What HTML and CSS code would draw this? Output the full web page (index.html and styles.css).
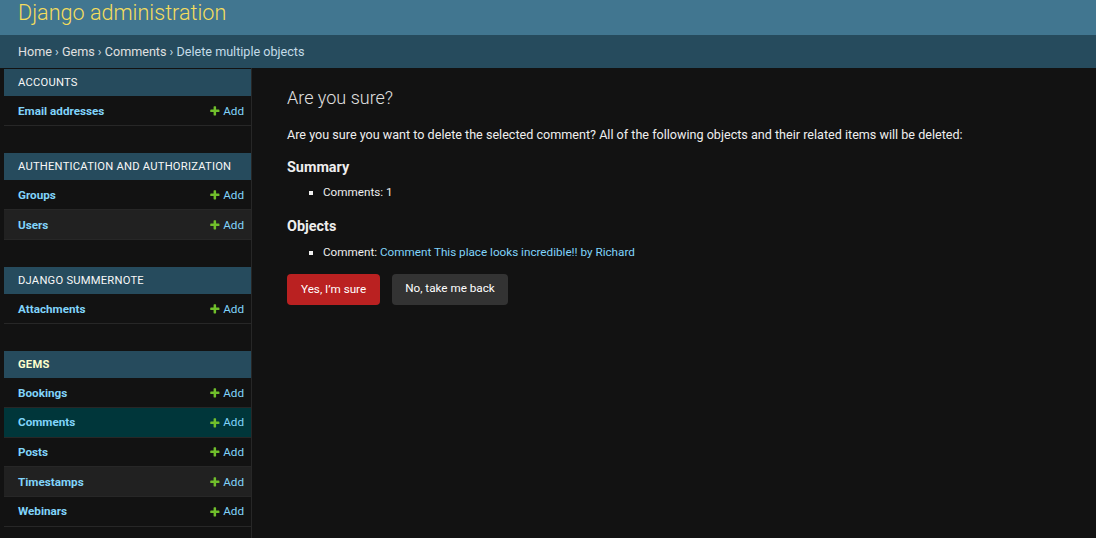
FILE: index.html
```html
<!DOCTYPE html>
<html lang="en">
<head>
<meta charset="utf-8">
<title>Delete multiple objects | Django site admin</title>
<link rel="stylesheet" href="styles.css">
</head>
<body>
<header class="header">
  <h1 class="branding">Django administration</h1>
</header>
<nav class="breadcrumbs">
  <a href="#">Home</a> › <a href="#">Gems</a> › <a href="#">Comments</a> › Delete multiple objects
</nav>
<div class="main">
  <aside class="sidebar">
    <div class="module">
      <div class="caption">Accounts</div>
      <div class="row"><a class="model" href="#">Email addresses</a><a class="addlink" href="#"><svg class="plus" viewBox="0 0 1792 1792"><path d="M1600 796v192q0 40-28 68t-68 28h-416v416q0 40-28 68t-68 28h-192q-40 0-68-28t-28-68v-416h-416q-40 0-68-28t-28-68v-192q0-40 28-68t68-28h416v-416q0-40 28-68t68-28h192q40 0 68 28t28 68v416h416q40 0 68 28t28 68z"/></svg>Add</a></div>
    </div>
    <div class="module">
      <div class="caption">Authentication and Authorization</div>
      <div class="row"><a class="model" href="#">Groups</a><a class="addlink" href="#"><svg class="plus" viewBox="0 0 1792 1792"><path d="M1600 796v192q0 40-28 68t-68 28h-416v416q0 40-28 68t-68 28h-192q-40 0-68-28t-28-68v-416h-416q-40 0-68-28t-28-68v-192q0-40 28-68t68-28h416v-416q0-40 28-68t68-28h192q40 0 68 28t28 68v416h416q40 0 68 28t28 68z"/></svg>Add</a></div>
      <div class="row even"><a class="model" href="#">Users</a><a class="addlink" href="#"><svg class="plus" viewBox="0 0 1792 1792"><path d="M1600 796v192q0 40-28 68t-68 28h-416v416q0 40-28 68t-68 28h-192q-40 0-68-28t-28-68v-416h-416q-40 0-68-28t-28-68v-192q0-40 28-68t68-28h416v-416q0-40 28-68t68-28h192q40 0 68 28t28 68v416h416q40 0 68 28t28 68z"/></svg>Add</a></div>
    </div>
    <div class="module">
      <div class="caption">Django Summernote</div>
      <div class="row"><a class="model" href="#">Attachments</a><a class="addlink" href="#"><svg class="plus" viewBox="0 0 1792 1792"><path d="M1600 796v192q0 40-28 68t-68 28h-416v416q0 40-28 68t-68 28h-192q-40 0-68-28t-28-68v-416h-416q-40 0-68-28t-28-68v-192q0-40 28-68t68-28h416v-416q0-40 28-68t68-28h192q40 0 68 28t28 68v416h416q40 0 68 28t28 68z"/></svg>Add</a></div>
    </div>
    <div class="module">
      <div class="caption current">Gems</div>
      <div class="row"><a class="model" href="#">Bookings</a><a class="addlink" href="#"><svg class="plus" viewBox="0 0 1792 1792"><path d="M1600 796v192q0 40-28 68t-68 28h-416v416q0 40-28 68t-68 28h-192q-40 0-68-28t-28-68v-416h-416q-40 0-68-28t-28-68v-192q0-40 28-68t68-28h416v-416q0-40 28-68t68-28h192q40 0 68 28t28 68v416h416q40 0 68 28t28 68z"/></svg>Add</a></div>
      <div class="row selected"><a class="model" href="#">Comments</a><a class="addlink" href="#"><svg class="plus" viewBox="0 0 1792 1792"><path d="M1600 796v192q0 40-28 68t-68 28h-416v416q0 40-28 68t-68 28h-192q-40 0-68-28t-28-68v-416h-416q-40 0-68-28t-28-68v-192q0-40 28-68t68-28h416v-416q0-40 28-68t68-28h192q40 0 68 28t28 68v416h416q40 0 68 28t28 68z"/></svg>Add</a></div>
      <div class="row"><a class="model" href="#">Posts</a><a class="addlink" href="#"><svg class="plus" viewBox="0 0 1792 1792"><path d="M1600 796v192q0 40-28 68t-68 28h-416v416q0 40-28 68t-68 28h-192q-40 0-68-28t-28-68v-416h-416q-40 0-68-28t-28-68v-192q0-40 28-68t68-28h416v-416q0-40 28-68t68-28h192q40 0 68 28t28 68v416h416q40 0 68 28t28 68z"/></svg>Add</a></div>
      <div class="row even"><a class="model" href="#">Timestamps</a><a class="addlink" href="#"><svg class="plus" viewBox="0 0 1792 1792"><path d="M1600 796v192q0 40-28 68t-68 28h-416v416q0 40-28 68t-68 28h-192q-40 0-68-28t-28-68v-416h-416q-40 0-68-28t-28-68v-192q0-40 28-68t68-28h416v-416q0-40 28-68t68-28h192q40 0 68 28t28 68v416h416q40 0 68 28t28 68z"/></svg>Add</a></div>
      <div class="row"><a class="model" href="#">Webinars</a><a class="addlink" href="#"><svg class="plus" viewBox="0 0 1792 1792"><path d="M1600 796v192q0 40-28 68t-68 28h-416v416q0 40-28 68t-68 28h-192q-40 0-68-28t-28-68v-416h-416q-40 0-68-28t-28-68v-192q0-40 28-68t68-28h416v-416q0-40 28-68t68-28h192q40 0 68 28t28 68v416h416q40 0 68 28t28 68z"/></svg>Add</a></div>
    </div>
  </aside>
  <main class="content">
    <h1 class="title">Are you sure?</h1>
    <p class="intro">Are you sure you want to delete the selected comment? All of the following objects and their related items will be deleted:</p>
    <h2 class="subhead">Summary</h2>
    <ul class="list">
      <li>Comments: 1</li>
    </ul>
    <h2 class="subhead">Objects</h2>
    <ul class="list">
      <li>Comment: <a href="#">Comment This place looks incredible!! by Richard</a></li>
    </ul>
    <form class="actions">
      <button type="button" class="btn btn-delete">Yes, I’m sure</button>
      <a href="#" class="btn btn-cancel">No, take me back</a>
    </form>
  </main>
</div>
</body>
</html>
```

FILE: styles.css
```css
* { box-sizing: border-box; }

html, body {
  margin: 0;
  padding: 0;
}

body {
  background: #121212;
  color: #eeeeee;
  font-family: Roboto, "Liberation Sans", sans-serif;
  font-size: 12.6px;
  height: 538px;
  overflow: hidden;
}

a { text-decoration: none; }

.header {
  background: #417690;
  height: 35px;
  padding: 0 18px;
}

.branding {
  margin: 0;
  font-size: 21.6px;
  font-weight: 300;
  line-height: 26px;
  color: #f5dd5d;
}

.breadcrumbs {
  background: #264b5d;
  height: 33px;
  line-height: 33px;
  padding: 0 18px;
  color: #c4dce8;
  font-size: 12.6px;
}

.breadcrumbs a { color: #e0e0e0; }

.main {
  display: flex;
  height: 470px;
}

.sidebar {
  flex: 0 0 252px;
  padding: 1px 0 0 4px;
  border-right: 1px solid #272727;
}

.module {
  margin-bottom: 27px;
}

.caption {
  height: 27.4px;
  line-height: 27.4px;
  padding-left: 14px;
  background: #264b5d;
  color: #f7f7f7;
  font-size: 11.2px;
  letter-spacing: 0.23px;
  text-transform: uppercase;
}

.caption.current {
  color: #ffffcc;
  font-weight: bold;
}

.row {
  display: flex;
  justify-content: space-between;
  align-items: center;
  height: 29.7px;
  padding: 0 7px 0 14px;
  border-bottom: 1px solid #272727;
  font-size: 11.7px;
}

.row.even { background: #212121; }
.row.selected { background: #00363a; }

.model {
  color: #81d4fa;
  font-weight: bold;
}

.addlink {
  display: inline-flex;
  align-items: center;
  color: #81d4fa;
}

.plus {
  width: 11.7px;
  height: 11.7px;
  margin-right: 2.7px;
  fill: #70bf2b;
}

.content {
  flex: 1;
  padding: 19px 35px 0;
}

.title {
  margin: 0 0 19px;
  font-size: 18px;
  font-weight: 300;
  color: #e0e0e0;
}

.intro {
  margin: 0;
}

.subhead {
  margin: 16.5px 0 8.5px;
  font-size: 14.4px;
  font-weight: bold;
  color: #eeeeee;
}

.list {
  margin: 0;
  padding-left: 36px;
  list-style: square;
  font-size: 11.7px;
}

.list li {
  padding: 1px 0 2.5px;
}

.list a { color: #81d4fa; }

.actions {
  display: flex;
  gap: 12px;
  margin-top: 13px;
}

.btn {
  display: block;
  height: 31px;
  padding: 0 14px;
  border: none;
  border-radius: 4px;
  color: #ffffff;
  font-family: Roboto, "Liberation Sans", sans-serif;
  font-size: 11.7px;
}

.btn-delete {
  background: #ba2121;
  line-height: 31px;
}

.btn-cancel {
  background: #333333;
  line-height: 28px;
  padding: 0 13px;
}
```
